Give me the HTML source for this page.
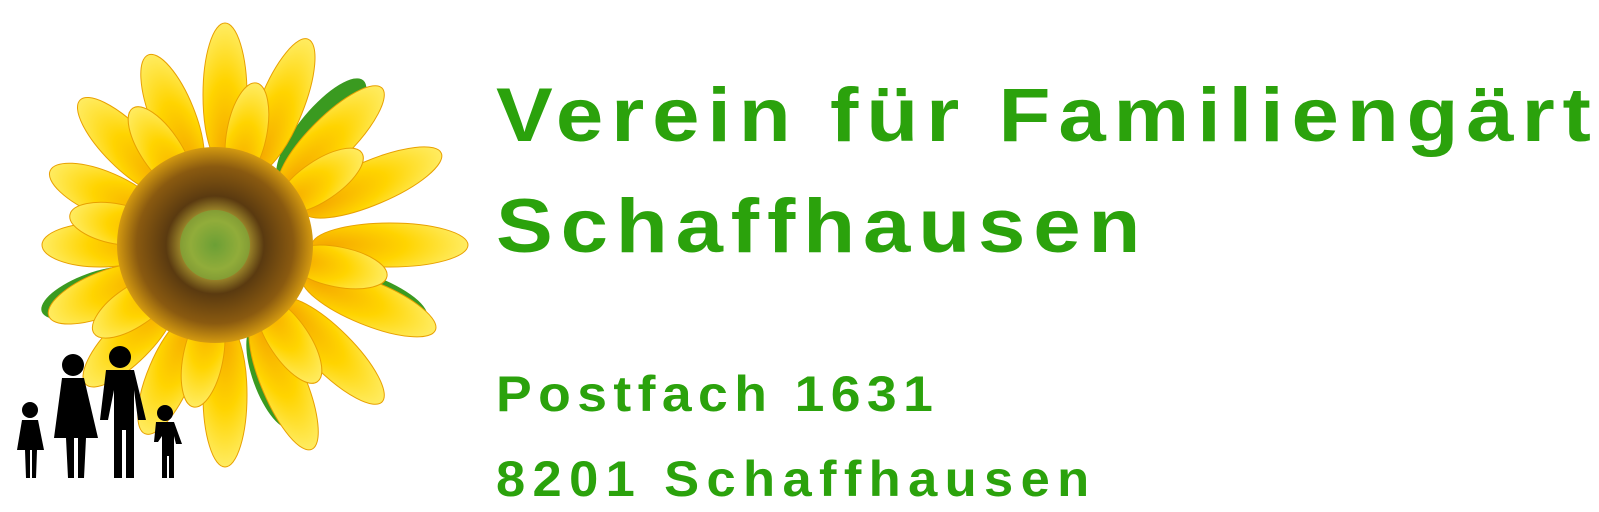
<!DOCTYPE html>
<html><head><meta charset="utf-8"><style>
html,body{margin:0;padding:0;background:#fff;width:1599px;height:512px;overflow:hidden;position:relative}
.wrap{position:absolute;left:0;top:0;width:1599px;height:512px;overflow:hidden}
.t{position:absolute;left:496px;color:#2ba20c;font-family:"Liberation Sans",sans-serif;white-space:nowrap;font-weight:bold;transform-origin:left top}
</style></head><body><div class="wrap">
<svg width="480" height="512" style="position:absolute;left:0;top:0">
<defs>
<radialGradient id="pet" cx="0.5" cy="0.9" r="1">
<stop offset="0" stop-color="#f5a800"/><stop offset="0.5" stop-color="#ffd400"/><stop offset="1" stop-color="#fff27a"/></radialGradient>
<radialGradient id="disc" cx="0.5" cy="0.5" r="0.5">
<stop offset="0" stop-color="#4a8a2a"/><stop offset="0.25" stop-color="#c6b63a"/><stop offset="0.5" stop-color="#5a3a10"/><stop offset="0.8" stop-color="#8a5a10"/><stop offset="1" stop-color="#d49a10"/></radialGradient>
</defs>
<g transform="translate(225,245)">
<g fill="#3a9a20">
<ellipse cx="0" cy="-150" rx="22" ry="65" transform="rotate(40)"/>
<ellipse cx="0" cy="-150" rx="22" ry="65" transform="rotate(110)"/>
<ellipse cx="0" cy="-140" rx="20" ry="55" transform="rotate(160)"/>
<ellipse cx="0" cy="-140" rx="20" ry="55" transform="rotate(-110)"/>
</g>
<g fill="url(#pet)" stroke="#e8a000" stroke-width="1">
<ellipse cx="0" cy="-150" rx="22" ry="72" transform="rotate(0)"/>
<ellipse cx="0" cy="-150" rx="22" ry="72" transform="rotate(22)"/>
<ellipse cx="0" cy="-150" rx="22" ry="72" transform="rotate(45)"/>
<ellipse cx="0" cy="-160" rx="22" ry="75" transform="rotate(67)"/>
<ellipse cx="0" cy="-165" rx="22" ry="78" transform="rotate(90)"/>
<ellipse cx="0" cy="-155" rx="22" ry="72" transform="rotate(112)"/>
<ellipse cx="0" cy="-150" rx="22" ry="72" transform="rotate(135)"/>
<ellipse cx="0" cy="-150" rx="22" ry="72" transform="rotate(157)"/>
<ellipse cx="0" cy="-150" rx="22" ry="72" transform="rotate(180)"/>
<ellipse cx="0" cy="-140" rx="22" ry="65" transform="rotate(-22)"/>
<ellipse cx="0" cy="-140" rx="22" ry="65" transform="rotate(-45)"/>
<ellipse cx="0" cy="-130" rx="22" ry="60" transform="rotate(-67)"/>
<ellipse cx="0" cy="-125" rx="22" ry="58" transform="rotate(-90)"/>
<ellipse cx="0" cy="-130" rx="22" ry="60" transform="rotate(-112)"/>
<ellipse cx="0" cy="-135" rx="22" ry="62" transform="rotate(-135)"/>
<ellipse cx="0" cy="-140" rx="22" ry="65" transform="rotate(-157)"/>
<ellipse cx="0" cy="-115" rx="20" ry="50" transform="rotate(11)"/>
<ellipse cx="0" cy="-115" rx="20" ry="50" transform="rotate(56)"/>
<ellipse cx="0" cy="-115" rx="20" ry="50" transform="rotate(101)"/>
<ellipse cx="0" cy="-115" rx="20" ry="50" transform="rotate(146)"/>
<ellipse cx="0" cy="-115" rx="20" ry="50" transform="rotate(191)"/>
<ellipse cx="0" cy="-110" rx="20" ry="48" transform="rotate(236)"/>
<ellipse cx="0" cy="-110" rx="20" ry="48" transform="rotate(281)"/>
<ellipse cx="0" cy="-115" rx="20" ry="50" transform="rotate(326)"/>
</g>
<circle cx="-10" cy="0" r="98" fill="url(#disc)"/>
<circle cx="-10" cy="0" r="35" fill="#7aa83a" opacity="0.7"/>
</g>
<g fill="#000">
<circle cx="30" cy="410" r="8"/><path d="M22 420 h16 l6 30 h-7 l-1 28 h-4 v-28 h-2 v28 h-4 l-1 -28 h-8z"/>
<circle cx="73" cy="365" r="11"/><path d="M62 378 h22 l14 60 h-12 l-2 40 h-6 v-40 h-4 v40 h-6 l-2 -40 h-12 z"/>
<circle cx="120" cy="357" r="11"/><path d="M106 370 h28 l12 50 h-8 l-4 -30 v88 h-8 v-48 h-4 v48 h-8 v-88 l-6 30 h-8z"/>
<circle cx="165" cy="413" r="8"/><path d="M156 422 h18 l8 22 h-6 l-2 -8 v42 h-5 v-22 h-2 v22 h-5 v-42 l-4 6 h-4z"/>
</g>
</svg>
<div class="t" style="top:72px;font-size:76px;letter-spacing:7px;transform:scaleX(1.12)">Verein für Familiengärten</div>
<div class="t" style="top:183px;font-size:76px;letter-spacing:7px;transform:scaleX(1.12)">Schaffhausen</div>
<div class="t" style="top:365px;font-size:50px;letter-spacing:6px;transform:scaleX(1.07)">Postfach 1631</div>
<div class="t" style="top:450px;font-size:50px;letter-spacing:7px;transform:scaleX(1.05)">8201 Schaffhausen</div>
</div></body></html>
